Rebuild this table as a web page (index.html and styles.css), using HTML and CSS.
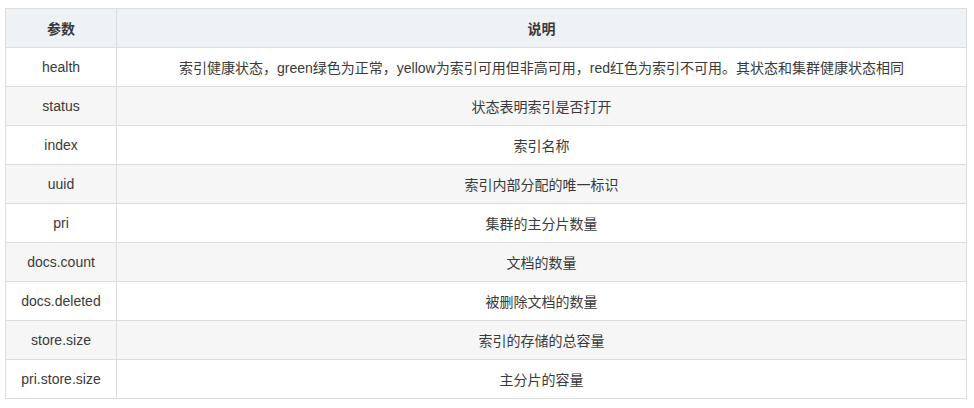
FILE: index.html
```html
<!DOCTYPE html>
<html lang="zh">
<head>
<meta charset="utf-8">
<link rel="stylesheet" href="styles.css">
</head>
<body>
<table class="params">
  <thead>
    <tr><th class="c1">参数</th><th>说明</th></tr>
  </thead>
  <tbody>
    <tr><td>health</td><td>索引健康状态，green绿色为正常，yellow为索引可用但非高可用，red红色为索引不可用。其状态和集群健康状态相同</td></tr>
    <tr><td>status</td><td>状态表明索引是否打开</td></tr>
    <tr><td>index</td><td>索引名称</td></tr>
    <tr><td>uuid</td><td>索引内部分配的唯一标识</td></tr>
    <tr><td>pri</td><td>集群的主分片数量</td></tr>
    <tr><td>docs.count</td><td>文档的数量</td></tr>
    <tr><td>docs.deleted</td><td>被删除文档的数量</td></tr>
    <tr><td>store.size</td><td>索引的存储的总容量</td></tr>
    <tr><td>pri.store.size</td><td>主分片的容量</td></tr>
  </tbody>
</table>
</body>
</html>
```
FILE: styles.css
```css
html, body { background: #fff; }
body {
  margin: 0;
  padding: 8px 8px 0 5px;
  font-family: "Liberation Sans", Arial, "Noto Sans CJK SC", sans-serif;
  font-size: 14px;
  color: #3a3a3a;
}
.params {
  border-collapse: collapse;
  width: 962px;
  table-layout: fixed;
}
.params th, .params td {
  border: 1px solid #dddddd;
  height: 39px;
  padding: 0 8px;
  text-align: center;
  vertical-align: middle;
  box-sizing: border-box;
}
.params th {
  background: #eff2f5;
  font-weight: bold;
}
.params .c1 { width: 111px; }
.params tbody tr:nth-child(even) td { background: #f6f6f6; }
```
